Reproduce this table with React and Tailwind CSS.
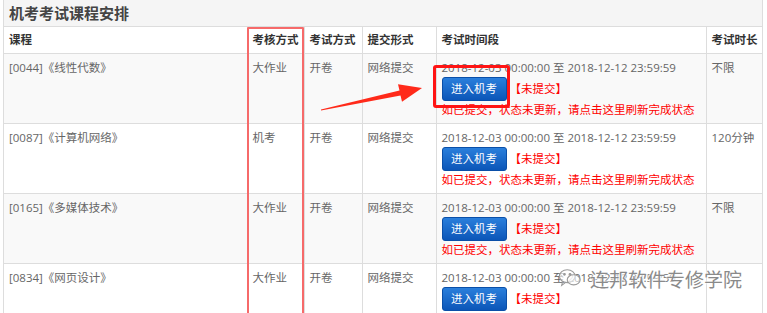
import React from "react";

const rows = [
  { course: "[0044]《线性代数》", kind: "大作业", dur: "不限", bg: "bg-[#f9f9f9]" },
  { course: "[0087]《计算机网络》", kind: "机考", dur: "120分钟", bg: "bg-white" },
  { course: "[0165]《多媒体技术》", kind: "大作业", dur: "不限", bg: "bg-[#f9f9f9]" },
  { course: "[0834]《网页设计》", kind: "大作业", dur: "", bg: "bg-white" },
];

function Btn() {
  return (
    <span className="inline-flex h-[24px] w-[65px] items-center justify-center rounded-[3px] border border-[#0a4fa8] bg-gradient-to-b from-[#2a7fdc] to-[#0b56b8] text-[11.5px] leading-none text-white">
      进入机考
    </span>
  );
}

export default function App() {
  const font = { fontFamily: '"Segoe UI","Open Sans","Noto Sans CJK SC",sans-serif' };
  const cjk = { fontFamily: '"Noto Sans CJK SC",sans-serif' };
  return (
    <div className="relative h-[313px] w-[767px] overflow-hidden bg-white" style={font}>
      <div className="ml-[3px] w-[760px] border-x border-[#dddddd]">
        <div className="flex h-[27px] items-center border-b border-[#dddddd] bg-[#f5f5f5] pl-[5px] text-[15px] font-bold text-[#444]" style={cjk}>
          机考考试课程安排
        </div>
        <table className="w-full table-fixed border-collapse text-[11.5px] text-[#666]">
          <colgroup>
            <col className="w-[244px]" />
            <col className="w-[56px]" />
            <col className="w-[58px]" />
            <col className="w-[74px]" />
            <col className="w-[270px]" />
            <col />
          </colgroup>
          <thead>
            <tr className="h-[26px] text-left text-[#333]" style={cjk}>
              <th className="border-b border-r border-[#dddddd] pl-[5px] font-semibold">课程</th>
              <th className="border-b border-r border-[#dddddd] pl-[4px] font-semibold">考核方式</th>
              <th className="border-b border-r border-[#dddddd] pl-[5px] font-semibold">考试方式</th>
              <th className="border-b border-r border-[#dddddd] pl-[5px] font-semibold">提交形式</th>
              <th className="border-b border-r border-[#dddddd] pl-[5px] font-semibold">考试时间段</th>
              <th className="border-b border-[#dddddd] pl-[5px] font-semibold">考试时长</th>
            </tr>
          </thead>
          <tbody>
            {rows.map((r, i) => (
              <tr key={i} className={`h-[70px] align-top leading-[18px] ${r.bg}`}>
                <td className="border-b border-r border-[#dddddd] pl-[5px] pt-[5px]">{r.course}</td>
                <td className="border-b border-r border-[#dddddd] pl-[4px] pt-[5px]">{r.kind}</td>
                <td className="border-b border-r border-[#dddddd] pl-[5px] pt-[5px]">开卷</td>
                <td className="border-b border-r border-[#dddddd] pl-[5px] pt-[5px]">网络提交</td>
                <td className="border-b border-r border-[#dddddd] pl-[5px] pt-[5px]">
                  <div className="whitespace-nowrap">2018-12-03 00:00:00 至 2018-12-12 23:59:59</div>
                  <div className="flex h-[24px] items-center">
                    <Btn />
                    <span className="ml-[3px] text-[#ff0000]">【未提交】</span>
                  </div>
                  <div className="whitespace-nowrap text-[#ff0000]">如已提交，状态未更新，请点击这里刷新完成状态</div>
                </td>
                <td className="border-b border-[#dddddd] pl-[5px] pt-[5px]">{r.dur}</td>
              </tr>
            ))}
          </tbody>
        </table>
      </div>

      {/* red annotation around column */}
      <div className="absolute left-[247px] top-[27px] h-[300px] w-[57px] rounded-[1px] border-[length:2px] border-solid border-[#f66a6a]" />
      {/* red annotation around button */}
      <div className="absolute left-[433px] top-[65px] h-[43px] w-[77px] rounded-[3px] border-[length:3px] border-solid border-[#ff1414]" />
      {/* arrow */}
      <svg className="absolute left-0 top-0" width="767" height="313" viewBox="0 0 767 313">
        <polygon
          points="321,109.5 399.5,90.6 398,84.2 422,88 402,101.8 400.5,95.4 321,110.5"
          fill="#ff2a1a"
        />
      </svg>
      {/* watermark */}
      <div className="absolute left-[558px] top-[267px] flex items-center gap-[8px]">
        <svg width="24" height="22" viewBox="0 0 26 22" fill="none" stroke="#9a9a9a" strokeWidth="1.2">
          <ellipse cx="10" cy="9" rx="8.5" ry="7" fill="rgba(255,255,255,0.6)" />
          <path d="M5 15 L4 19 L8 16" />
          <ellipse cx="17" cy="13" rx="7" ry="5.5" fill="rgba(255,255,255,0.6)" />
          <circle cx="7" cy="7" r="0.9" fill="#9a9a9a" />
          <circle cx="13" cy="7" r="0.9" fill="#9a9a9a" />
        </svg>
        <span
          className="text-[19px] leading-none text-[#8a8a8a]"
          style={{ ...cjk, textShadow: "0 0 2px #fff, 0 0 2px #fff, 0 0 3px #fff" }}
        >
          连邦软件专修学院
        </span>
      </div>
    </div>
  );
}
